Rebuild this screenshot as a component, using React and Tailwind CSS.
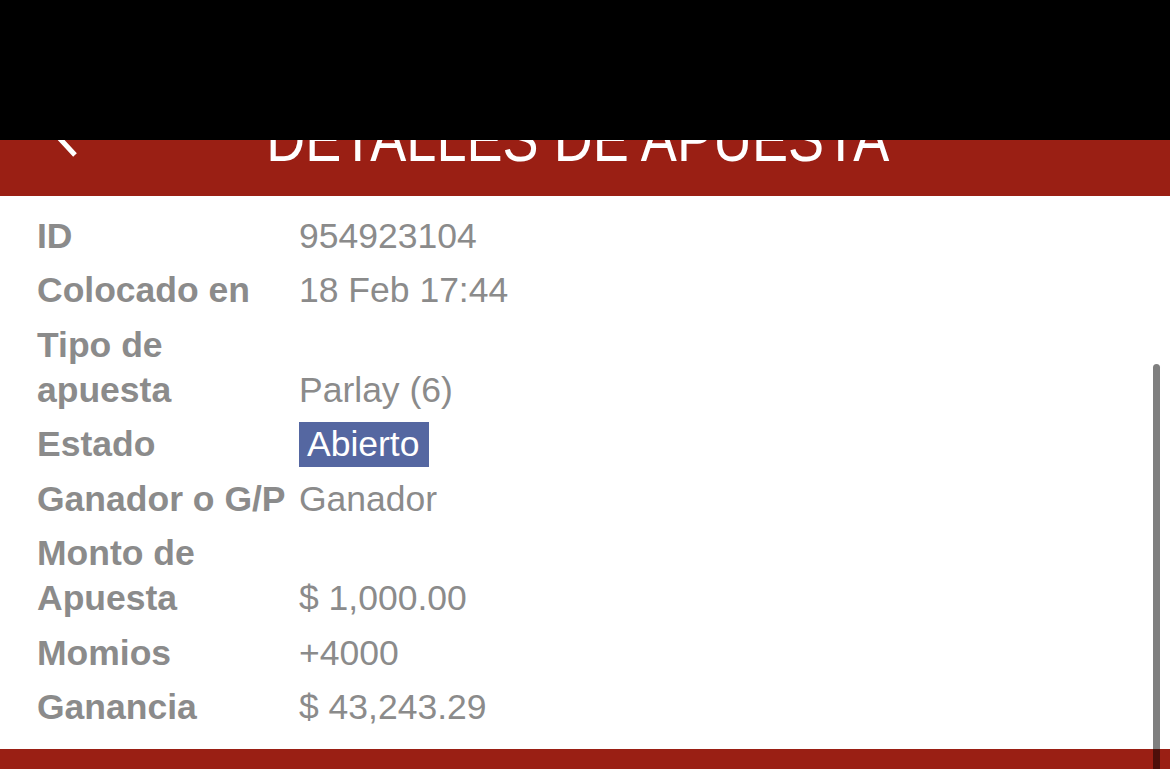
export default function App() {
  const rows = [
    { label: "ID", value: "954923104" },
    { label: "Colocado en", value: "18 Feb 17:44" },
    { label: ["Tipo de", "apuesta"], value: "Parlay (6)" },
    { label: "Estado", value: "Abierto", badge: true },
    { label: "Ganador o G/P", value: "Ganador" },
    { label: ["Monto de", "Apuesta"], value: "$ 1,000.00" },
    { label: "Momios", value: "+4000" },
    { label: "Ganancia", value: "$ 43,243.29" },
  ];
  return (
    <div
      className="relative h-[769px] w-[1170px] overflow-hidden bg-white flex flex-col"
      style={{ fontFamily: '"Liberation Sans", Arial, sans-serif' }}
    >
      <header className="relative h-[196px] shrink-0 bg-[#9a1f14] overflow-hidden">
        <svg
          className="absolute left-[40px] top-[92px]"
          width="44"
          height="70"
          viewBox="0 0 44 70"
          fill="none"
          stroke="white"
          strokeWidth="5"
        >
          <path d="M35 8 L10 36 L35 63" />
        </svg>
        <div className="absolute left-0 right-0 top-[103px] flex justify-center pr-[15px]">
          <span className="block text-[64px] leading-[72px] text-white scale-x-[0.845] whitespace-nowrap">
            DETALLES DE APUESTA
          </span>
        </div>
      </header>
      <div className="absolute left-0 top-0 h-[140px] w-full bg-black" />

      <main className="flex-1 pt-[13px] pl-[37px] text-[35.5px] leading-[45px] text-[#8b8b8b]">
        {rows.map((r, i) => (
          <div key={i} className="grid grid-cols-[262px_1fr] py-[4.75px]">
            <div className="font-bold whitespace-nowrap">
              {Array.isArray(r.label)
                ? r.label.map((l, j) => <div key={j}>{l}</div>)
                : r.label}
            </div>
            <div className="flex items-end">
              {r.badge ? (
                <span className="inline-block bg-[#5567a1] pl-[8px] pr-[10px] text-white">
                  {r.value}
                </span>
              ) : (
                <span>{r.value}</span>
              )}
            </div>
          </div>
        ))}
      </main>
      <footer className="h-[20px] shrink-0 bg-[#9a1f14]" />

      <div className="absolute left-[1153px] top-[364px] h-[420px] w-[7px] rounded-full bg-black/50" />
    </div>
  );
}
